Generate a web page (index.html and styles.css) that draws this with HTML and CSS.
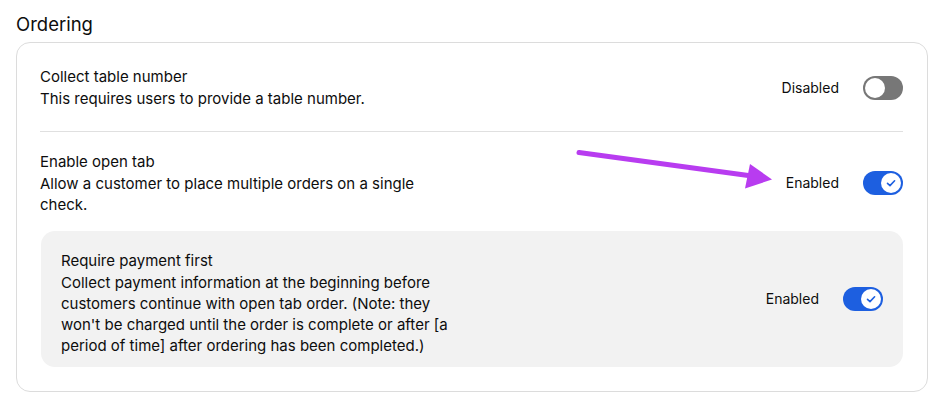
FILE: index.html
```html
<!DOCTYPE html>
<html>
<head>
<meta charset="utf-8">
<link rel="stylesheet" href="styles.css">
</head>
<body>
<div class="page">
  <h2 class="section-title">Ordering</h2>
  <div class="card">
    <div class="row row-first">
      <div class="text">
        <div class="title">Collect table number</div>
        <div class="desc">This requires users to provide a table number.</div>
      </div>
      <div class="control">
        <span class="label">Disabled</span>
        <span class="toggle off"><span class="knob"></span></span>
      </div>
    </div>
    <div class="divider"></div>
    <div class="row row-second">
      <div class="text">
        <div class="title">Enable open tab</div>
        <div class="desc">Allow a customer to place multiple orders on a single check.</div>
      </div>
      <div class="control">
        <span class="label">Enabled</span>
        <span class="toggle on"><span class="knob"><svg viewBox="0 0 20 20" width="20" height="20"><path d="M6.5 10.3 L9 12.6 L13.6 7.8" fill="none" stroke="#1d5fe0" stroke-width="1.6" stroke-linecap="round" stroke-linejoin="round"/></svg></span></span>
      </div>
    </div>
    <div class="subbox">
      <div class="row">
        <div class="text">
          <div class="title">Require payment first</div>
          <div class="desc">Collect payment information at the beginning before customers continue with open tab order. (Note: they won't be charged until the order is complete or after [a period of time] after ordering has been completed.)</div>
        </div>
        <div class="control control-sub">
          <span class="label">Enabled</span>
          <span class="toggle on"><span class="knob"><svg viewBox="0 0 20 20" width="20" height="20"><path d="M6.5 10.3 L9 12.6 L13.6 7.8" fill="none" stroke="#1d5fe0" stroke-width="1.6" stroke-linecap="round" stroke-linejoin="round"/></svg></span></span>
        </div>
      </div>
    </div>
  </div>
  <svg class="annotation" width="948" height="408" viewBox="0 0 948 408">
    <line x1="579" y1="152.5" x2="752" y2="176" stroke="#b83cf0" stroke-width="5" stroke-linecap="round"/>
    <polygon points="750,164 772,179.5 745,188.5" fill="#b83cf0"/>
  </svg>
</div>
</body>
</html>
```
FILE: styles.css
```css
* { box-sizing: border-box; }
html, body { margin: 0; padding: 0; background: #fff; }
body {
  font-family: Inter, "Noto Sans", "Liberation Sans", sans-serif;
  color: #0d0d0d;
}
.page {
  position: relative;
  width: 948px;
  height: 408px;
  padding: 12px 16px 0 16px;
}
.section-title {
  margin: 0 0 6px 0;
  font-size: 18.5px;
  line-height: 24px;
  font-weight: 400;
}
.card {
  width: 912px;
  border: 1px solid #dcdcdc;
  border-radius: 14px;
  padding: 23px 24px 24px 23px;
}
.row {
  display: flex;
  align-items: center;
  justify-content: space-between;
}
.row-first { padding-bottom: 22px; }
.row-second { padding-top: 19px; padding-bottom: 16px; }
.divider { height: 1px; background: #e0e0e0; }
.text { width: 390px; }
.title {
  font-size: 15px;
  line-height: 21px;
  font-weight: 400;
  margin-bottom: 1px;
}
.desc {
  font-size: 15px;
  line-height: 21px;
  font-weight: 400;
}
.control {
  display: flex;
  align-items: center;
  gap: 24px;
}
.control-sub { margin-bottom: 9px; }
.label { font-size: 14px; line-height: 18px; }
.toggle {
  display: flex;
  align-items: center;
  width: 40px;
  height: 24px;
  border-radius: 12px;
  padding: 2px;
}
.toggle.off { background: #777777; justify-content: flex-start; }
.toggle.on { background: #1d5fe0; justify-content: flex-end; }
.knob {
  width: 20px;
  height: 20px;
  border-radius: 50%;
  background: #fff;
  display: block;
}
.knob svg { display: block; }
.subbox {
  background: #f2f2f2;
  border-radius: 14px;
  padding: 19px 20px 11px 20px;
  margin-left: 1px;
}
.annotation {
  position: absolute;
  left: 0;
  top: 0;
  pointer-events: none;
}
```
